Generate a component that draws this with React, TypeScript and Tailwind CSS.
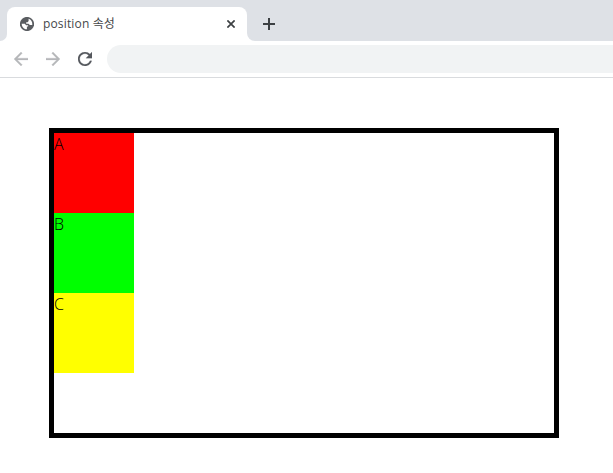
const icons = {
  back: "M20 11H7.83l5.59-5.59L12 4l-8 8 8 8 1.41-1.41L7.83 13H20v-2z",
  forward: "M12 4l-1.41 1.41L16.17 11H4v2h12.17l-5.58 5.59L12 20l8-8z",
  reload:
    "M17.65 6.35C16.2 4.9 14.21 4 12 4c-4.42 0-7.99 3.58-7.99 8s3.57 8 7.99 8c3.73 0 6.84-2.55 7.73-6h-2.08c-.82 2.33-3.04 4-5.65 4-3.31 0-6-2.69-6-6s2.69-6 6-6c1.66 0 3.14.69 4.22 1.78L13 11h7V4l-2.35 2.35z",
};

function Icon({ d, className }: { d: string; className: string }) {
  return (
    <svg viewBox="4 4 16 16" className={className} fill="currentColor" stroke="currentColor">
      <path d={d} />
    </svg>
  );
}

function Globe() {
  return (
    <svg viewBox="0 0 14 14" className="size-3.5 shrink-0">
      <circle cx="7" cy="7" r="7.1" fill="#5a5d61" />
      <path
        d="M8.6 1.8C11 2.5 12.3 4.6 12.3 7c0 .4 0 .7-.1 1H9.8L8.5 6.7H6.2V5.3h1.4l1-1.3zM1.7 6.8h3.1L6.1 8.2h2v1.4H6.9v2.6H5.6C3.3 11.5 1.7 9.5 1.7 7z"
        fill="white"
      />
    </svg>
  );
}

function TabStrip() {
  return (
    <div className="flex h-[41px] items-end bg-[#dee1e6]">
      <div className="h-[34px] w-[7px] bg-white">
        <div className="h-full rounded-br-[7px] bg-[#dee1e6]" />
      </div>
      <div className="flex h-[34px] w-60 items-center rounded-t-lg bg-white pl-[13px] pr-3">
        <Globe />
        <span className="ml-[9px] whitespace-pre font-['Open_Sans','Noto_Sans_CJK_KR',sans-serif] text-[12px] leading-4 tracking-[0.15px] text-[#45474a]">
          position 속성
        </span>
        <svg viewBox="0 0 8 8" className="ml-auto size-2" stroke="#3c4043" strokeWidth="1.7">
          <path d="M.4.4l7.2 7.2M7.6.4L.4 7.6" />
        </svg>
      </div>
      <div className="h-[34px] flex-1 bg-white">
        <div className="flex h-full items-center rounded-bl-lg bg-[#dee1e6] pl-4">
          <svg viewBox="0 0 12 12" className="size-3" stroke="#3c4043" strokeWidth="2">
            <path d="M6 0v12M0 6h12" />
          </svg>
        </div>
      </div>
    </div>
  );
}

function Toolbar() {
  return (
    <div className="flex h-[37px] items-center border-b border-[#d9dbde] bg-white pl-3.5">
      <Icon d={icons.back} className="size-3.5 stroke-[0.3] text-[#b5b7b9]" />
      <Icon d={icons.forward} className="ml-[18px] size-3.5 stroke-[0.3] text-[#b5b7b9]" />
      <Icon d={icons.reload} className="ml-[18px] size-3.5 stroke-[0.2] text-[#55585d]" />
      <div className="ml-[15px] h-7 flex-1 rounded-l-full bg-[#f1f3f4]" />
    </div>
  );
}

const boxes = [
  { label: "A", color: "bg-[#ff0000]" },
  { label: "B", color: "bg-[#00ff00]" },
  { label: "C", color: "bg-[#ffff00]" },
];

export default function App() {
  return (
    <div className="flex h-[473px] w-[613px] flex-col overflow-hidden bg-white">
      <TabStrip />
      <Toolbar />
      <main className="ml-[49px] mt-[50px] h-[310px] w-[510px] border-[5px] border-black">
        {boxes.map((box) => (
          <div
            key={box.label}
            className={`size-20 font-['Open_Sans','Noto_Sans_CJK_KR',sans-serif] text-base font-light leading-[22px] text-black ${box.color}`}
          >
            {box.label}
          </div>
        ))}
      </main>
    </div>
  );
}
